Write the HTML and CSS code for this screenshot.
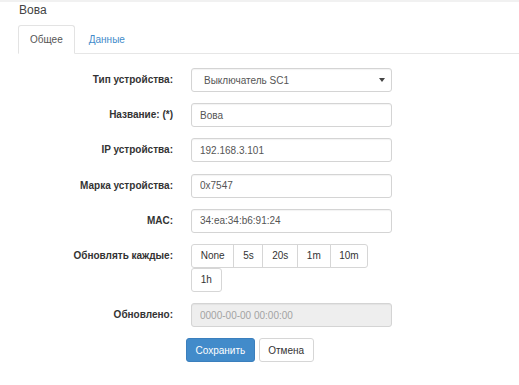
FILE: index.html
```html
<!DOCTYPE html>
<html lang="ru">
<head>
  <meta charset="UTF-8">
  <meta name="viewport" content="width=device-width, initial-scale=1.0">
  <title>Вова</title>
  <link rel="stylesheet" href="styles.css">
</head>
<body>
  <div class="topbar"></div>
  <h4 class="title">Вова</h4>

  <ul class="tabs">
    <li class="active"><span>Общее</span></li>
    <li><a href="#">Данные</a></li>
  </ul>

  <form class="device-form">
    <div class="form-row">
      <label>Тип устройства:</label>
      <div class="select-box">
        <span>Выключатель SC1</span>
        <i class="caret"></i>
      </div>
    </div>

    <div class="form-row">
      <label>Название: (*)</label>
      <input class="field" type="text" value="Вова">
    </div>

    <div class="form-row">
      <label>IP устройства:</label>
      <input class="field" type="text" value="192.168.3.101">
    </div>

    <div class="form-row">
      <label>Марка устройства:</label>
      <input class="field" type="text" value="0x7547">
    </div>

    <div class="form-row">
      <label>MAC:</label>
      <input class="field" type="text" value="34:ea:34:b6:91:24">
    </div>

    <div class="form-row">
      <label>Обновлять каждые:</label>
      <div class="btn-group">
        <button type="button" class="first">None</button>
        <button type="button">5s</button>
        <button type="button">20s</button>
        <button type="button">1m</button>
        <button type="button" class="row-end">10m</button>
        <button type="button" class="last">1h</button>
      </div>
    </div>

    <div class="form-row">
      <label>Обновлено:</label>
      <input class="field" type="text" placeholder="0000-00-00 00:00:00" disabled>
    </div>

    <div class="actions">
      <button type="button" class="btn-primary">Сохранить</button>
      <button type="button" class="btn-default">Отмена</button>
    </div>
  </form>
</body>
</html>
```

FILE: styles.css
```css
body {
  margin: 0;
  font-family: "Liberation Sans", Arial, sans-serif;
  font-size: 10px;
  color: #333;
  background: #fff;
}
.topbar {
  height: 2px;
  background: #f1f1f1;
}
.title {
  margin: 0;
  padding: 0 19px;
  font-size: 12px;
  line-height: 16px;
  font-weight: normal;
  color: #444;
}
.tabs {
  display: flex;
  list-style: none;
  margin: 7px 0 0 18px;
  padding: 0;
  border-bottom: 1px solid #e6e6e6;
}
.tabs li {
  margin-right: 2px;
  margin-bottom: -1px;
}
.tabs li span,
.tabs li a {
  display: block;
  padding: 0 11px;
  line-height: 27px;
  border: 1px solid transparent;
  border-radius: 3px 3px 0 0;
}
.tabs li a {
  color: #428bca;
  text-decoration: none;
}
.tabs li.active span {
  color: #555;
  background: #fff;
  border-color: #e3e3e3 #e3e3e3 transparent;
}
.device-form {
  padding: 14px 0 0 18px;
}
.form-row {
  display: flex;
  align-items: flex-start;
  margin-bottom: 11.2px;
}
.form-row label {
  width: 155px;
  margin-right: 18px;
  padding-top: 5px;
  line-height: 14px;
  text-align: right;
  font-weight: bold;
  color: #333;
}
.field,
.select-box {
  box-sizing: border-box;
  width: 201px;
  height: 24px;
  padding: 0 8px;
  font-family: inherit;
  font-size: 10px;
  color: #555;
  background: #fff;
  border: 1px solid #d4d4d4;
  border-radius: 3px;
  box-shadow: inset 0 1px 1px rgba(0, 0, 0, 0.05);
}
.field:disabled {
  background: #eee;
}
.field::placeholder {
  color: #a3a3a3;
}
.select-box {
  display: flex;
  align-items: center;
  justify-content: space-between;
  padding: 0 6px 0 12px;
}
.caret {
  width: 0;
  height: 0;
  border-left: 3px solid transparent;
  border-right: 3px solid transparent;
  border-top: 4px solid #444;
}
.btn-group {
  display: flex;
  flex-wrap: wrap;
  width: 201px;
}
.btn-group button {
  box-sizing: border-box;
  height: 24px;
  margin-right: -1px;
  padding: 0 8.75px;
  font-family: inherit;
  font-size: 10px;
  color: #333;
  background: #fff;
  border: 1px solid #d6d6d6;
  border-radius: 0;
}
.btn-group .first {
  border-radius: 3px 0 0 3px;
}
.btn-group .row-end {
  border-radius: 0 3px 3px 0;
}
.btn-group .last {
  border-radius: 3px;
}
.actions {
  display: flex;
  gap: 4px;
  padding-left: 168px;
}
.actions button {
  height: 24px;
  padding: 0 8.5px;
  font-family: inherit;
  font-size: 10px;
  border-radius: 3px;
  cursor: pointer;
}
.btn-primary {
  color: #fff;
  background: #428bca;
  border: 1px solid #3b7fbd;
}
.btn-default {
  color: #333;
  background: #fff;
  border: 1px solid #d6d6d6;
}
```
